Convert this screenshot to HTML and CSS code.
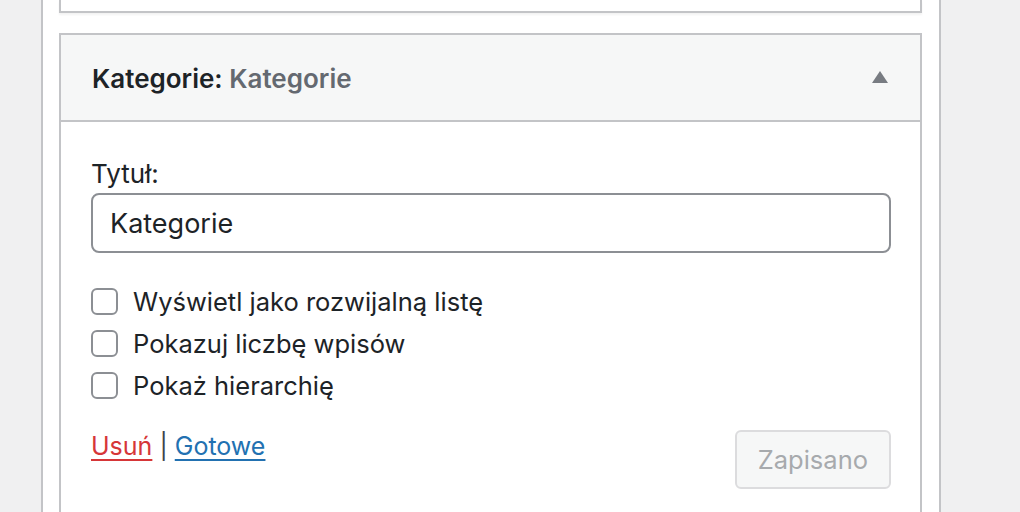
FILE: index.html
```html
<!DOCTYPE html>
<html lang="pl">
<head>
<meta charset="utf-8">
<title>Kategorie</title>
<link rel="stylesheet" href="styles.css">
</head>
<body>
<div class="panel">
  <div class="widget-prev"></div>
  <div class="widget">
    <div class="widget-top">
      <h3 class="widget-title">Kategorie<span class="colon">:</span> <span class="in-title">Kategorie</span></h3>
      <svg class="toggle" width="16" height="12" viewBox="0 0 16 12"><polygon points="8,0 16,12 0,12" fill="#787c82"/></svg>
    </div>
    <div class="widget-inside">
      <label class="field-label" for="title">Tytuł:</label>
      <input class="text-input" id="title" type="text" value="Kategorie">
      <div class="checks">
        <label class="check-row"><input type="checkbox" class="checkbox"><span>Wyświetl jako rozwijalną listę</span></label>
        <label class="check-row"><input type="checkbox" class="checkbox"><span>Pokazuj liczbę wpisów</span></label>
        <label class="check-row"><input type="checkbox" class="checkbox"><span>Pokaż hierarchię</span></label>
      </div>
      <div class="widget-footer">
        <div class="links"><a href="#" class="link-delete">Usuń</a> <span class="sep">|</span> <a href="#" class="link-done">Gotowe</a></div>
        <button class="btn-saved" disabled>Zapisano</button>
      </div>
    </div>
  </div>
</div>
</body>
</html>
```
FILE: styles.css
```css
html, body {
  margin: 0;
  padding: 0;
}
body {
  background: #f0f0f1;
  height: 512px;
  overflow: hidden;
  font-family: Inter, "Noto Sans", sans-serif;
  color: #1d2327;
}
.panel {
  margin-left: 41px;
  width: 863px;
  min-height: 512px;
  background: #fff;
  border-left: 2px solid #c3c4c7;
  border-right: 2px solid #c3c4c7;
  padding: 0 17px 0 16px;
  box-sizing: content-box;
}
.widget-prev {
  height: 11px;
  border: 2px solid #c3c4c7;
  border-top: none;
  box-shadow: 0 2px 2px rgba(0, 0, 0, 0.05);
  background: #fff;
}
.widget {
  margin-top: 20px;
  border: 2px solid #c3c4c7;
  background: #fff;
}
.widget-top {
  height: 83px;
  background: #f6f7f7;
  border-bottom: 2px solid #c3c4c7;
  display: flex;
  align-items: center;
  justify-content: space-between;
  padding: 2px 32px 0 31px;
  box-sizing: content-box;
}
.widget-title {
  margin: 0;
  font-size: 26px;
  font-weight: 600;
  color: #1d2327;
  line-height: 36px;
}
.in-title {
  color: #646970;
}
.toggle {
  display: block;
  margin-top: -4px;
}
.widget-inside {
  padding: 34px 29px 60px 30px;
}
.field-label {
  display: block;
  font-size: 26px;
  line-height: 36px;
  color: #1d2327;
}
.text-input {
  display: block;
  margin: 1px 0 0;
  width: 100%;
  height: 60px;
  box-sizing: border-box;
  border: 2px solid #8c8f94;
  border-radius: 8px;
  padding: 0 17px;
  font-family: Inter, "Noto Sans", sans-serif;
  font-size: 27px;
  color: #1d2327;
  background: #fff;
  outline: none;
}
.checks {
  margin-top: 27px;
}
.check-row {
  display: flex;
  align-items: center;
  height: 42px;
  gap: 15px;
  font-size: 25.5px;
  color: #1d2327;
}
.checkbox {
  appearance: none;
  -webkit-appearance: none;
  margin: 0;
  width: 27px;
  height: 27px;
  border: 2px solid #8c8f94;
  border-radius: 6px;
  background: #fff;
  box-sizing: border-box;
  flex: none;
}
.widget-footer {
  margin-top: 24px;
  display: flex;
  justify-content: space-between;
  align-items: flex-start;
}
.links {
  font-size: 25px;
  line-height: 32px;
}
.links a {
  text-decoration: underline;
  text-decoration-thickness: 2px;
  text-underline-offset: 4px;
}
.link-delete {
  color: #d63638;
}
.link-done {
  color: #2271b1;
}
.sep {
  color: #3c434a;
}
.btn-saved {
  height: 59px;
  padding: 0 21px;
  border: 2px solid #dcdcde;
  border-radius: 6px;
  background: #f6f7f7;
  color: #a7aaad;
  font-family: Inter, "Noto Sans", sans-serif;
  font-size: 25.5px;
}
```
